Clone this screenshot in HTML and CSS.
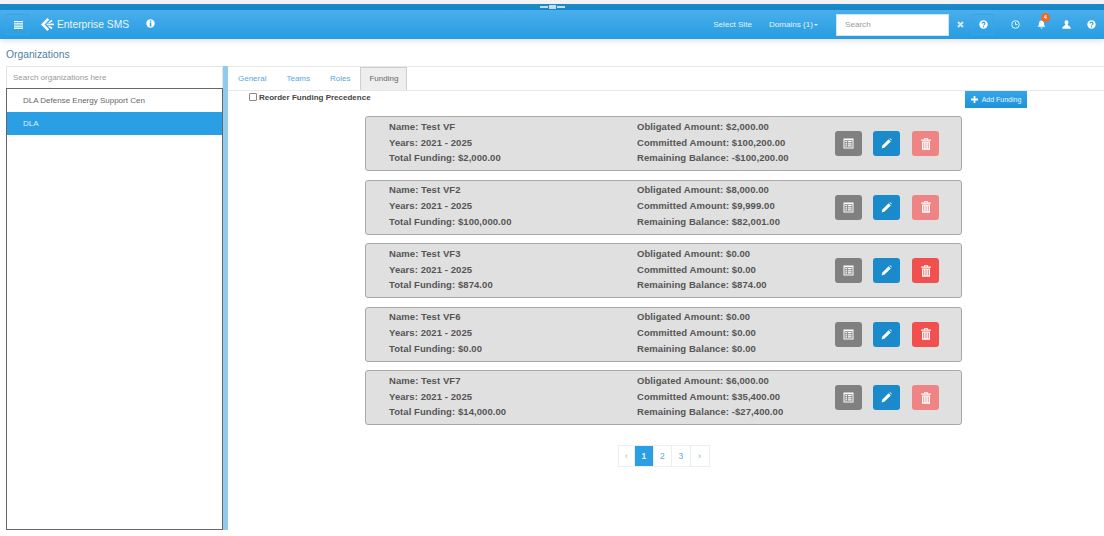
FILE: index.html
```html
<!DOCTYPE html>
<html lang="en">
<head>
    <meta charset="UTF-8">
    <title>Enterprise SMS</title>
    <link rel="stylesheet" href="styles.css">
</head>
<body>

    <div class="top-strip">
        <div class="strip-handle"><span></span><span class="mid"></span><span></span></div>
    </div>

    <header class="navbar">
        <button class="nav-toggle">
            <svg width="9" height="8" viewBox="0 0 9 8"><path fill="#fff" d="M0 0h9v1.3H0zM0 2.2h9v1.3H0zM0 4.4h9v1.3H0zM0 6.6h9v1.3H0z"/></svg>
        </button>
        <svg class="logo" width="13" height="13" viewBox="0 0 13 13"><path fill="#fff" d="M6.4 0 8.2 1.8 3.6 6.5 8.2 11.2 6.4 13 0 6.5z"/><path fill="#fff" d="M5.6 5.6H13V7.2H5.6z"/><path fill="#fff" d="M7 4.4 10.6 1.8 11.6 3.2 8.4 5.2zM7 8.6 10.6 11.2 11.6 9.8 8.4 7.8z"/></svg>
        <span class="brand">Enterprise SMS</span>
        <svg class="info" width="9" height="9" viewBox="0 0 9 9"><circle cx="4.5" cy="4.5" r="4.2" fill="#fff"/><path fill="#2a9fe4" d="M3.8 1.4h1.5v1.3H3.8zM3.8 3.5h1.5v4H3.8z"/></svg>

        <div class="nav-right">
            <a class="nav-link site">Select Site</a>
            <a class="nav-link domains">Domains (1)<i class="caret"></i></a>
            <input class="nav-search" type="text" placeholder="Search">
            <svg class="clear" width="7" height="7" viewBox="0 0 7 7"><path d="M1 1 6 6M6 1 1 6" stroke="#cfe8f8" stroke-width="2"/></svg>
            <span class="help-box">
                <svg width="9" height="9" viewBox="0 0 9 9"><circle cx="4.5" cy="4.5" r="4.2" fill="#fff"/><path d="M3 3.5C3 1.7 6 1.7 6 3.5 6 4.6 4.5 4.6 4.5 5.6" fill="none" stroke="#2a9fe4" stroke-width="1.1"/><path fill="#2a9fe4" d="M3.9 6.2h1.2v1.2H3.9z"/></svg>
            </span>
            <svg class="nav-icon clock" width="9" height="9" viewBox="0 0 9 9"><circle cx="4.5" cy="4.5" r="3.8" fill="none" stroke="#e6f4fc" stroke-width="1"/><path d="M4.5 2.2v2.5h2" fill="none" stroke="#e6f4fc"/></svg>
            <span class="bell">
                <svg width="9" height="9" viewBox="0 0 9 9"><path fill="#fff" d="M4.5 0.5C6.4 0.5 7 2 7 3.6 7 5.2 7.6 6 8.4 6.8H0.6C1.4 6 2 5.2 2 3.6 2 2 2.6 0.5 4.5 0.5zM3.4 7.4h2.2C5.5 8.8 3.5 8.8 3.4 7.4z"/></svg>
                <b class="badge">4</b>
            </span>
            <svg class="nav-icon user" width="9" height="9" viewBox="0 0 9 9"><path fill="#fff" d="M4.5 0.3C6 0.3 6.5 1.5 6.4 2.8 6.3 3.8 5.8 4.6 5.5 5 6.5 5.8 8.6 6 8.7 8.7H0.3C0.4 6 2.5 5.8 3.5 5 3.2 4.6 2.7 3.8 2.6 2.8 2.5 1.5 3 0.3 4.5 0.3z"/></svg>
            <svg class="nav-icon help" width="9" height="9" viewBox="0 0 9 9"><circle cx="4.5" cy="4.5" r="4.2" fill="#fff"/><path d="M3 3.5C3 1.7 6 1.7 6 3.5 6 4.6 4.5 4.6 4.5 5.6" fill="none" stroke="#2a9fe4" stroke-width="1.1"/><path fill="#2a9fe4" d="M3.9 6.2h1.2v1.2H3.9z"/></svg>
        </div>
    </header>

    <div class="page-title">Organizations</div>

    <main class="split">
        <aside class="org-panel">
            <input class="org-search" type="text" placeholder="Search organizations here">
            <ul class="org-list">
                <li>DLA Defense Energy Support Cen</li>
                <li class="active">DLA</li>
            </ul>
        </aside>

        <div class="splitter"></div>

        <section class="detail">
            <nav class="tabs">
                <a>General</a>
                <a>Teams</a>
                <a>Roles</a>
                <a class="current">Funding</a>
            </nav>

            <div class="funding-bar">
                <label class="reorder"><input type="checkbox"> Reorder Funding Precedence</label>
                <button class="add-funding">
                    <svg width="7" height="7" viewBox="0 0 7 7"><path fill="#fff" d="M2.6 0h1.8v2.6H7v1.8H4.4V7H2.6V4.4H0V2.6h2.6z"/></svg>
                    Add Funding
                </button>
            </div>

            <div class="fund-list">
                <div class="fund">
                    <div class="col-a"><p>Name: Test VF</p><p>Years: 2021 - 2025</p><p>Total Funding: $2,000.00</p></div>
                    <div class="col-b"><p>Obligated Amount: $2,000.00</p><p>Committed Amount: $100,200.00</p><p>Remaining Balance: -$100,200.00</p></div>
                    <div class="actions">
                        <button class="act grey"><svg width="11" height="11" viewBox="0 0 11 11"><use href="#i-list"/></svg></button>
                        <button class="act blue"><svg width="11" height="11" viewBox="0 0 11 11"><use href="#i-pen"/></svg></button>
                        <button class="act red off"><svg width="10" height="12" viewBox="0 0 10 12"><use href="#i-trash"/></svg></button>
                    </div>
                </div>
                <div class="fund">
                    <div class="col-a"><p>Name: Test VF2</p><p>Years: 2021 - 2025</p><p>Total Funding: $100,000.00</p></div>
                    <div class="col-b"><p>Obligated Amount: $8,000.00</p><p>Committed Amount: $9,999.00</p><p>Remaining Balance: $82,001.00</p></div>
                    <div class="actions">
                        <button class="act grey"><svg width="11" height="11" viewBox="0 0 11 11"><use href="#i-list"/></svg></button>
                        <button class="act blue"><svg width="11" height="11" viewBox="0 0 11 11"><use href="#i-pen"/></svg></button>
                        <button class="act red off"><svg width="10" height="12" viewBox="0 0 10 12"><use href="#i-trash"/></svg></button>
                    </div>
                </div>
                <div class="fund">
                    <div class="col-a"><p>Name: Test VF3</p><p>Years: 2021 - 2025</p><p>Total Funding: $874.00</p></div>
                    <div class="col-b"><p>Obligated Amount: $0.00</p><p>Committed Amount: $0.00</p><p>Remaining Balance: $874.00</p></div>
                    <div class="actions">
                        <button class="act grey"><svg width="11" height="11" viewBox="0 0 11 11"><use href="#i-list"/></svg></button>
                        <button class="act blue"><svg width="11" height="11" viewBox="0 0 11 11"><use href="#i-pen"/></svg></button>
                        <button class="act red"><svg width="10" height="12" viewBox="0 0 10 12"><use href="#i-trash"/></svg></button>
                    </div>
                </div>
                <div class="fund">
                    <div class="col-a"><p>Name: Test VF6</p><p>Years: 2021 - 2025</p><p>Total Funding: $0.00</p></div>
                    <div class="col-b"><p>Obligated Amount: $0.00</p><p>Committed Amount: $0.00</p><p>Remaining Balance: $0.00</p></div>
                    <div class="actions">
                        <button class="act grey"><svg width="11" height="11" viewBox="0 0 11 11"><use href="#i-list"/></svg></button>
                        <button class="act blue"><svg width="11" height="11" viewBox="0 0 11 11"><use href="#i-pen"/></svg></button>
                        <button class="act red"><svg width="10" height="12" viewBox="0 0 10 12"><use href="#i-trash"/></svg></button>
                    </div>
                </div>
                <div class="fund">
                    <div class="col-a"><p>Name: Test VF7</p><p>Years: 2021 - 2025</p><p>Total Funding: $14,000.00</p></div>
                    <div class="col-b"><p>Obligated Amount: $6,000.00</p><p>Committed Amount: $35,400.00</p><p>Remaining Balance: -$27,400.00</p></div>
                    <div class="actions">
                        <button class="act grey"><svg width="11" height="11" viewBox="0 0 11 11"><use href="#i-list"/></svg></button>
                        <button class="act blue"><svg width="11" height="11" viewBox="0 0 11 11"><use href="#i-pen"/></svg></button>
                        <button class="act red off"><svg width="10" height="12" viewBox="0 0 10 12"><use href="#i-trash"/></svg></button>
                    </div>
                </div>
            </div>

            <div class="pager">
                <a class="muted">‹</a>
                <a class="on">1</a>
                <a>2</a>
                <a>3</a>
                <a>›</a>
            </div>
        </section>
    </main>

    <svg class="defs" width="0" height="0">
        <defs>
            <g id="i-list" fill="#fff">
                <path fill-rule="evenodd" d="M0.5 0.5h10v10h-10zM1.5 2.2v7.3h8V2.2z"/>
                <path d="M2.4 3.1h1.6v1.2H2.4zM4.8 3.1h3.8v1.2H4.8zM2.4 5.2h1.6v1.2H2.4zM4.8 5.2h3.8v1.2H4.8zM2.4 7.3h1.6v1.2H2.4zM4.8 7.3h3.8v1.2H4.8z"/>
            </g>
            <g id="i-pen" fill="#fff">
                <path d="M7.6 1.2 9.8 3.4 3.6 9.6 0.6 10.4 1.4 7.4z"/>
                <path d="M8.4 0.5 9.2 0.2 10.8 1.8 10.5 2.6z"/>
            </g>
            <g id="i-trash" fill="#fff">
                <path fill-rule="evenodd" d="M3 1.6V0.2H7V1.6H9.8V2.8H0.2V1.6zM3.9 1.6H6.1V1H3.9z"/>
                <path fill-rule="evenodd" d="M1 3.4H9V11.8H1zM2.4 4.6V10.6H3.2V4.6zM4.6 4.6V10.6H5.4V4.6zM6.8 4.6V10.6H7.6V4.6z"/>
            </g>
        </defs>
    </svg>
</body>
</html>
```

FILE: styles.css
```css
:root
{
    --nav-blue: #2a9fe4;
    --dark-blue: #1a8acb;
    --link-blue: #5aa9e0;
    --text-grey: #555555;
}

*
{
    box-sizing: border-box;
    padding: 0px;
    margin: 0px;
    font-family: "Liberation Sans", Arial, sans-serif;
}

html, body
{
    height: 100%;
    overflow: hidden;
}

body
{
    display: flex;
    flex-flow: column nowrap;
    background-color: #fff;
}

.top-strip
{
    flex: none;
    display: flex;
    justify-content: center;
    align-items: center;
    height: 10px;
    border-top: 4px solid #f3f3f3;
    background-color: var(--dark-blue);
}

.strip-handle
{
    display: flex;
    gap: 1px;
    align-items: center;
}

.strip-handle span
{
    width: 8px;
    height: 2px;
    background-color: #bfe0f5;
}

.strip-handle .mid
{
    height: 4px;
    width: 7px;
}

.navbar
{
    flex: none;
    display: flex;
    align-items: center;
    height: 29px;
    background: linear-gradient(#4aafec, #269ce2);
    box-shadow: 0 2px 6px rgba(0, 0, 0, 0.12);
    color: #fff;
}

.nav-toggle
{
    display: flex;
    justify-content: center;
    align-items: center;
    width: 23px;
    height: 21px;
    margin-left: 6px;
    padding-left: 1px;
    border: 1px solid #3ba4e4;
    background: transparent;
}

.logo
{
    margin-left: 12px;
}

.brand
{
    margin-left: 3px;
    font-size: 10.3px;
    color: #eaf6fd;
}

.info
{
    margin-left: 17px;
    margin-top: -3px;
}

.nav-right
{
    display: flex;
    align-items: center;
    margin-left: auto;
    height: 100%;
}

.nav-link
{
    font-size: 8.1px;
    color: #e3f2fc;
}

.domains
{
    margin-left: 17px;
}

.caret
{
    display: inline-block;
    margin-left: 1px;
    vertical-align: middle;
    border-top: 2.5px solid #e3f2fc;
    border-left: 2.5px solid transparent;
    border-right: 2.5px solid transparent;
}

.nav-search
{
    width: 113px;
    height: 22px;
    margin-left: 18px;
    padding-left: 8px;
    border: 1px solid #cfe6f5;
    font-size: 8.1px;
    background-color: #fff;
}

.nav-search::placeholder, .org-search::placeholder
{
    color: #9a9a9a;
}

.clear
{
    margin-left: 8px;
}

.help-box
{
    display: flex;
    justify-content: center;
    align-items: center;
    width: 22px;
    height: 21px;
    margin-left: 8px;
    border: 1px solid #3ba4e4;
}

.nav-icon
{
    flex: none;
}

.clock
{
    margin-left: 17px;
}

.bell
{
    position: relative;
    display: flex;
    margin-left: 17px;
}

.badge
{
    position: absolute;
    top: -7px;
    left: 4px;
    width: 9px;
    height: 9px;
    border-radius: 50%;
    background-color: #ef6a22;
    color: #fff;
    font-size: 5px;
    line-height: 9px;
    text-align: center;
}

.user
{
    margin-left: 16px;
}

.help
{
    margin-left: 16px;
    margin-right: 8px;
}

.page-title
{
    flex: none;
    height: 27px;
    padding: 10px 0 0 6px;
    font-size: 10.3px;
    color: #4f7f9f;
}

.split
{
    flex: 1;
    display: flex;
    min-height: 0;
    padding: 0 0 6px 6px;
}

.org-panel
{
    flex: none;
    display: flex;
    flex-flow: column nowrap;
    width: 217px;
}

.org-search
{
    flex: none;
    height: 22px;
    padding-left: 6px;
    border: 1px solid #e4e4e4;
    border-bottom: none;
    font-size: 8px;
}

.org-list
{
    flex: 1;
    list-style: none;
    border: 1px solid #666;
    border-right-width: 1.5px;
}

.org-list li
{
    height: 23px;
    padding-left: 16px;
    font-size: 8px;
    line-height: 23px;
    color: #666;
}

.org-list li.active
{
    background-color: var(--nav-blue);
    color: #dff0fb;
}

.splitter
{
    flex: none;
    width: 5px;
    background-color: #8fcbec;
}

.detail
{
    flex: 1;
    display: flex;
    flex-flow: column nowrap;
    min-width: 0;
}

.tabs
{
    flex: none;
    display: flex;
    height: 25px;
    padding-left: 1px;
    border-top: 1px solid #e8e8e8;
    border-bottom: 1px solid #e8e8e8;
}

.tabs a
{
    padding: 0 9px;
    margin-right: 2px;
    font-size: 8px;
    line-height: 24px;
    color: var(--link-blue);
}

.tabs a.current
{
    margin-left: -1px;
    padding: 0 8px;
    background-color: #eeeeee;
    border: 1px solid #cfcfcf;
    border-bottom: none;
    color: #666;
    line-height: 22px;
}

.funding-bar
{
    flex: none;
    display: flex;
    justify-content: space-between;
    height: 25px;
    padding: 0 77px 0 20px;
}

.reorder
{
    display: flex;
    align-items: center;
    gap: 2px;
    height: 12px;
    font-size: 8px;
    font-weight: bold;
    color: #444;
}

.reorder input
{
    appearance: none;
    width: 8px;
    height: 8px;
    margin-left: 1px;
    border: 1px solid #888;
    border-radius: 1px;
    background-color: #fff;
}

.add-funding
{
    display: flex;
    align-items: center;
    justify-content: center;
    gap: 4px;
    width: 62px;
    height: 17px;
    border: none;
    background: linear-gradient(#34a5e8, #1f93da);
    color: #eaf6fd;
    font-size: 7px;
}

.fund-list
{
    flex: none;
    display: flex;
    flex-flow: column nowrap;
    gap: 8.5px;
    width: 597px;
    margin-left: 137px;
}

.fund
{
    display: flex;
    align-items: center;
    height: 55px;
    padding-left: 23px;
    border: 1px solid #a9a9a9;
    border-radius: 3px;
    background-color: #e0e0e0;
}

.fund p
{
    font-size: 9.5px;
    font-weight: bold;
    line-height: 15.75px;
    letter-spacing: 0.07px;
    color: var(--text-grey);
}

.col-a, .col-b
{
    margin-bottom: 2px;
}

.col-a
{
    width: 248px;
}

.col-b
{
    width: 198px;
}

.actions
{
    display: flex;
    gap: 11px;
}

.act
{
    display: flex;
    justify-content: center;
    align-items: center;
    width: 27px;
    height: 25px;
    border: none;
    border-radius: 3px;
}

.grey
{
    background-color: #808080;
}

.blue
{
    background-color: #1a8acb;
}

.red
{
    margin-left: 1px;
    background-color: #f0504e;
}

.red.off
{
    background-color: #ee8484;
}

.pager
{
    flex: none;
    display: flex;
    align-self: flex-start;
    height: 22px;
    margin: 20px 0 0 390px;
    border: 1px solid #eeeeee;
}

.pager a
{
    width: 18.5px;
    border-right: 1px solid #eeeeee;
    font-size: 8.5px;
    line-height: 20px;
    text-align: center;
    color: var(--link-blue);
}

.pager a:first-child
{
    width: 16px;
}

.pager a:last-child
{
    width: 18px;
    border-right: none;
}

.pager a.muted
{
    color: #aaaaaa;
}

.pager a.on
{
    background-color: var(--nav-blue);
    color: #e6f4fc;
    font-weight: bold;
}

.defs
{
    position: absolute;
}
```
